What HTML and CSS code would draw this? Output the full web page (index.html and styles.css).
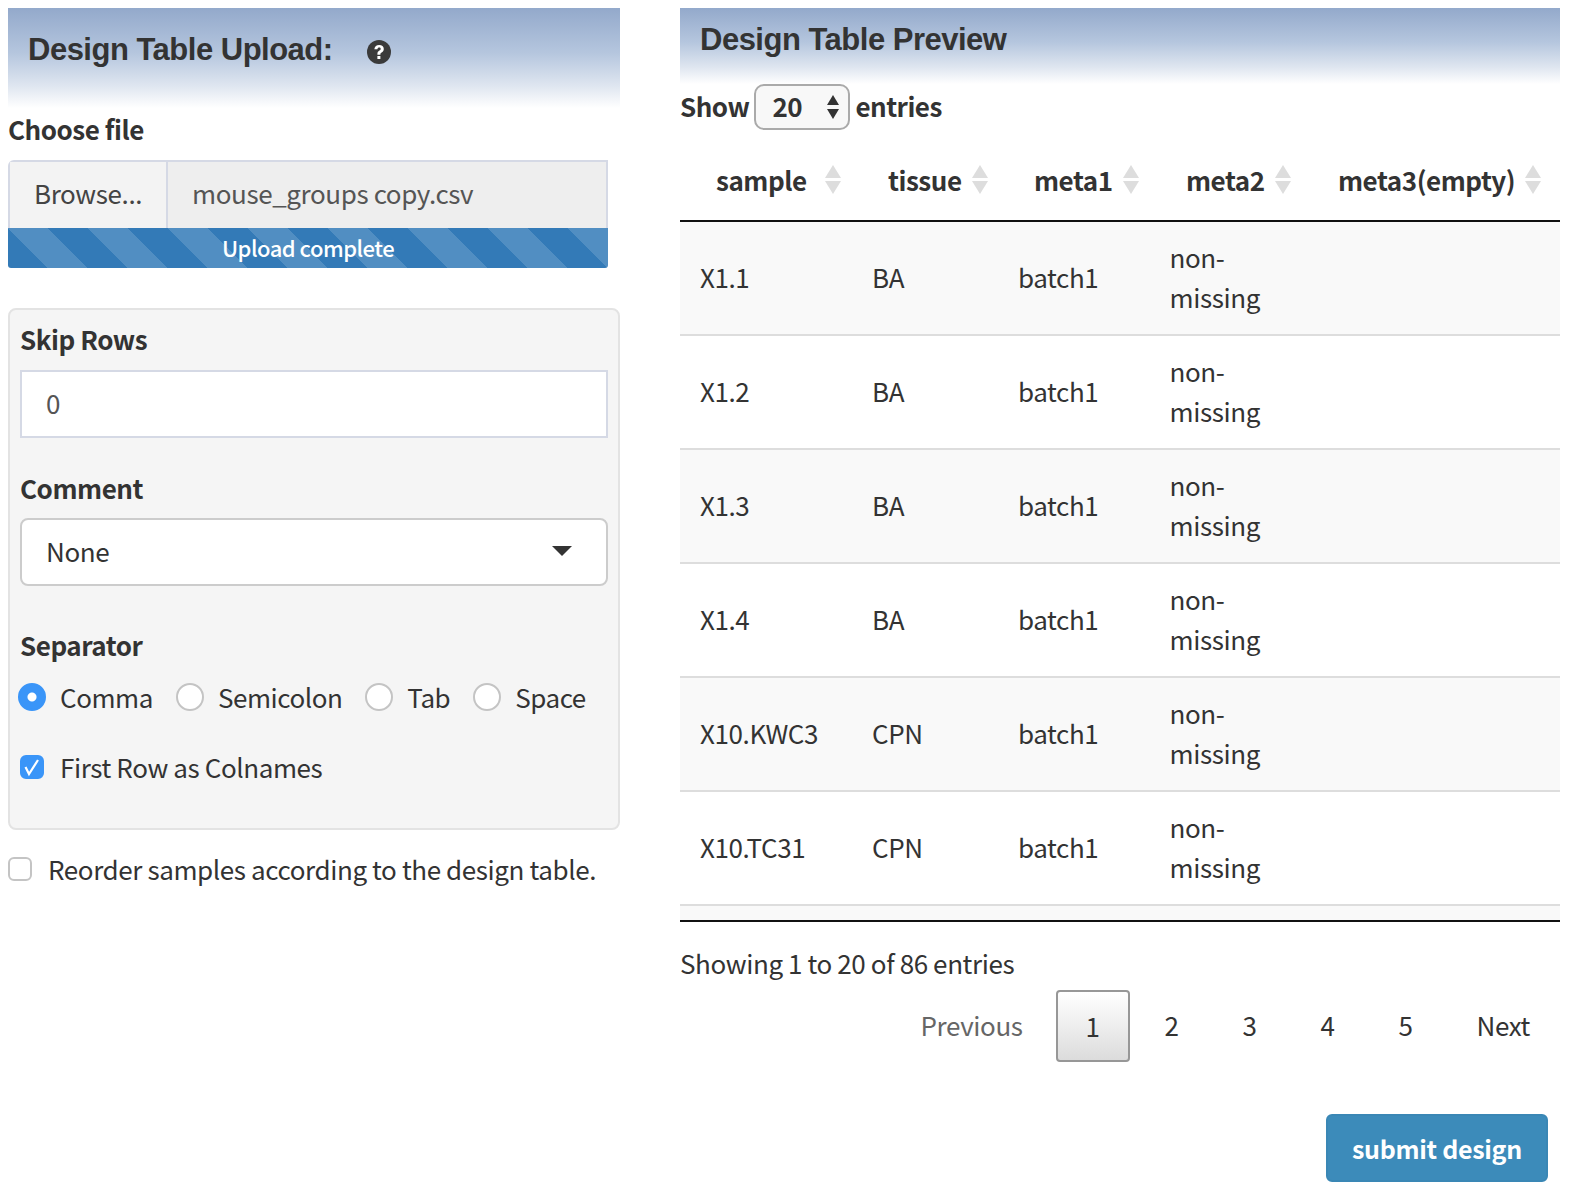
FILE: index.html
```html
<!DOCTYPE html>
<html>
<head>
<meta charset="utf-8">
<title>Design Table</title>
<link rel="stylesheet" href="styles.css">
</head>
<body>
<div class="page">
  <section class="left">
    <h2 class="head head-left">Design Table Upload:
      <svg class="help" viewBox="0 0 24 24"><circle cx="12" cy="12" r="12" fill="#3a3a3a"/><path d="M7.300 9.200c.3-2.700 2.300-4.200 4.900-4.200 2.700 0 4.600 1.600 4.600 3.900 0 1.900-1.100 2.800-2.200 3.500-.9.600-1.200 1-1.200 1.800v.6h-3v-.9c0-1.700.8-2.600 2-3.400.9-.6 1.300-1 1.300-1.600 0-.8-.6-1.300-1.500-1.300-1 0-1.600.6-1.800 1.700z" fill="#fff"/><rect x="10.400" y="16" width="3" height="3" fill="#fff"/></svg>
    </h2>
    <div class="label label-file">Choose file</div>
    <div class="file">
      <span class="browse">Browse...</span>
      <span class="filename">mouse_groups copy.csv</span>
    </div>
    <div class="progress">Upload complete</div>
    <div class="well">
      <div class="label label-first">Skip Rows</div>
      <div class="input">0</div>
      <div class="label label-gap">Comment</div>
      <div class="select">None<span class="caret"></span></div>
      <div class="label label-sep">Separator</div>
      <div class="radios">
        <span class="radio-item"><span class="radio on"></span>Comma</span>
        <span class="radio-item"><span class="radio"></span>Semicolon</span>
        <span class="radio-item"><span class="radio"></span>Tab</span>
        <span class="radio-item"><span class="radio"></span>Space</span>
      </div>
      <div class="check-row">
        <span class="check on"><svg viewBox="0 0 20 20"><path d="M3.500 10l3.500 7 9-14" fill="none" stroke="#fff" stroke-width="2.200"/></svg></span>First Row as Colnames
      </div>
    </div>
    <div class="check-row reorder"><span class="check"></span>Reorder samples according to the design table.</div>
  </section>
  <section class="right">
    <h2 class="head head-right">Design Table Preview</h2>
    <div class="length">Show
      <span class="length-select">20<span class="updown"><i class="up"></i><i class="down"></i></span></span>
      entries
    </div>
    <table class="thead">
      <colgroup><col class="c1"><col class="c2"><col class="c3"><col class="c4"><col class="c5"></colgroup>
      <tr>
        <th>sample<span class="sort sort-wide"><i class="up"></i><i class="down"></i></span></th>
        <th>tissue<span class="sort"><i class="up"></i><i class="down"></i></span></th>
        <th>meta1<span class="sort"><i class="up"></i><i class="down"></i></span></th>
        <th>meta2<span class="sort"><i class="up"></i><i class="down"></i></span></th>
        <th>meta3(empty)<span class="sort"><i class="up"></i><i class="down"></i></span></th>
      </tr>
    </table>
    <div class="scroll">
      <table class="tbody">
        <colgroup><col class="c1"><col class="c2"><col class="c3"><col class="c4"><col class="c5"></colgroup>
        <tr><td>X1.1</td><td>BA</td><td>batch1</td><td>non-<br>missing</td><td></td></tr>
        <tr><td>X1.2</td><td>BA</td><td>batch1</td><td>non-<br>missing</td><td></td></tr>
        <tr><td>X1.3</td><td>BA</td><td>batch1</td><td>non-<br>missing</td><td></td></tr>
        <tr><td>X1.4</td><td>BA</td><td>batch1</td><td>non-<br>missing</td><td></td></tr>
        <tr><td>X10.KWC3</td><td>CPN</td><td>batch1</td><td>non-<br>missing</td><td></td></tr>
        <tr><td>X10.TC31</td><td>CPN</td><td>batch1</td><td>non-<br>missing</td><td></td></tr>
      </table>
    </div>
    <div class="info">Showing 1 to 20 of 86 entries</div>
    <div class="pager">
      <span class="pg prev">Previous</span>
      <span class="pg current">1</span>
      <span class="pg num">2</span>
      <span class="pg num">3</span>
      <span class="pg num">4</span>
      <span class="pg num">5</span>
      <span class="pg next">Next</span>
    </div>
    <div class="actions"><button class="submit">submit design</button></div>
  </section>
</div>
</body>
</html>
```
FILE: styles.css
```css
* { box-sizing: border-box; }
html, body { height: 100%; }
body {
  margin: 8px;
  font-family: "Noto Sans CJK JP", "Noto Sans", sans-serif;
  font-size: 26px;
  letter-spacing: -0.4px;
  line-height: 40px;
  color: #333;
  background: #fff;
  overflow: hidden;
}
.page { display: flex; gap: 60px; align-items: flex-start; }
.left { width: 612px; flex: none; }
.right { width: 880px; flex: none; }

.head {
  margin: 0;
  font-family: "Liberation Sans", Arial, sans-serif;
  font-weight: 700;
  font-size: 31px;
  letter-spacing: -0.5px;
  color: #333;
  background: linear-gradient(to bottom, #93a9cb 0%, #b5c6de 45%, #dfe6f0 78%, #fff 100%);
  padding-left: 20px;
}
.head-left { height: 100px; line-height: 84px; display: flex; align-items: flex-start; }
.head-right { height: 76px; line-height: 64px; }
.help { width: 24px; height: 24px; margin: 32px 0 0 34px; flex: none; }

.label { font-weight: 700; letter-spacing: -0.45px; line-height: 40px; }
.label-file { margin-top: 1px; }
.label-first { margin-top: -1px; }

.file { display: flex; height: 68px; margin-top: 11px; width: 600px; border: 2px solid #d5d9e5; border-bottom: 0; border-radius: 6px 0 0 0; color: #555; }
.browse { width: 158px; padding-left: 24px; line-height: 62px; background: #f3f3f3; border-right: 2px solid #d5d9e5; color: #444; }
.filename { flex: 1; padding-left: 24px; line-height: 62px; background: #eee; }

.progress {
  width: 600px; height: 40px; line-height: 38px;
  font-size: 22px; letter-spacing: -0.5px; font-weight: 500; color: #fff; text-align: center;
  background-color: #337ab7;
  background-image: linear-gradient(45deg, rgba(255,255,255,.15) 25%, transparent 25%, transparent 50%, rgba(255,255,255,.15) 50%, rgba(255,255,255,.15) 75%, transparent 75%, transparent);
  background-size: 80px 80px;
  border-radius: 0 0 3px 3px;
}

.well {
  margin-top: 40px; height: 522px;
  background: #f5f5f5; border: 2px solid #e3e3e3; border-radius: 8px;
  padding: 10px 10px 0;
}
.input {
  height: 68px; margin-top: 11px; padding-left: 24px; line-height: 62px;
  background: #fff; border: 2px solid #d5d9e5; color: #555;
}
.label-gap { margin-top: 30px; }
.label-sep { margin-top: 39px; }
.select {
  position: relative; height: 68px; margin-top: 10px; padding-left: 24px; line-height: 62px;
  background: #fff; border: 2px solid #ccc; border-radius: 8px;
}
.caret {
  position: absolute; right: 34px; top: 26px; width: 0; height: 0;
  border-left: 10px solid transparent; border-right: 10px solid transparent; border-top: 10px solid #333;
}
.radios { display: flex; margin: 12px 0 0 -2px; height: 40px; align-items: center; }
.radio-item { display: flex; align-items: center; margin-right: 23px; letter-spacing: -0.45px; }
.radio { width: 28px; height: 28px; border-radius: 50%; border: 2px solid #c4c4c4; background: #fff; margin-right: 14px; flex: none; }
.radio.on { background: radial-gradient(circle, #fff 0, #fff 4px, #3a95f8 5px); border-color: #3a95f8; }

.check-row { display: flex; align-items: center; height: 40px; }
.well .check-row { margin-top: 30px; }
.check { width: 24px; height: 24px; margin-right: 16px; border: 2px solid #c4c4c4; border-radius: 6px; background: #fff; flex: none; }
.check.on { background: #3a95f8; border-color: #3a95f8; }
.check svg { display: block; width: 20px; height: 20px; }
.reorder { margin-top: 19px; white-space: nowrap; }

.length { display: flex; align-items: flex-start; gap: 5px; height: 46px; line-height: 44px; letter-spacing: -0.5px; font-weight: 700; }
.length-select {
  position: relative; width: 96px; height: 46px; line-height: 40px; padding-left: 16px;
  border: 2px solid #aaa; border-radius: 10px; background: #f8f8f8;
}
.updown { position: absolute; right: 9px; top: 9px; }
.updown i, .sort i { display: block; width: 0; height: 0; border-left: 6px solid transparent; border-right: 6px solid transparent; }
.updown .up { border-bottom: 10px solid #333; margin-bottom: 4px; }
.updown .down { border-top: 10px solid #333; }

table { border-collapse: separate; border-spacing: 0; table-layout: fixed; width: 880px; }
.c1 { width: 172px; } .c2 { width: 146px; } .c3 { width: 152px; } .c4 { width: 152px; } .c5 { width: 258px; }
.thead { margin-top: 10px; }
th {
  height: 82px; padding: 0 0 0 36px; text-align: left; font-weight: 700; letter-spacing: -0.45px; white-space: nowrap;
  border-bottom: 2px solid #111; line-height: 40px;
}
th .sort { display: inline-block; margin-left: 10px; vertical-align: -3px; }
th .sort-wide { margin-left: 18px; }
.sort i { border-left-width: 8px; border-right-width: 8px; }
.sort .up { border-bottom: 13px solid #ddd; margin-bottom: 3px; }
.sort .down { border-top: 13px solid #ddd; }
.scroll { height: 700px; overflow: hidden; border-bottom: 2px solid #111; }
.scroll::after { content: ""; display: block; height: 20px; background: #f9f9f9; }
td { height: 114px; padding: 15px 0 17px 20px; border-bottom: 2px solid #ddd; vertical-align: middle; line-height: 40px; }
td:nth-child(4) { padding-left: 19.5px; }
tr:nth-child(odd) td { background: #f9f9f9; }

.info { margin-top: 21px; height: 40px; }
.pager { display: flex; align-items: center; justify-content: flex-end; height: 72px; margin-top: 7px; padding-right: 30px; }
.pg { text-align: center; line-height: 70px; height: 72px; }
.prev { color: #666; margin-right: 33px; }
.current { width: 74px; line-height: 68px; margin-right: 3px; border: 2px solid #979797; border-radius: 4px; background: linear-gradient(to bottom, #fff, #dcdcdc); }
.num { width: 78px; }
.next { margin-left: 32px; }
.actions { display: flex; justify-content: flex-end; margin-top: 52px; padding-right: 12px; }
.submit {
  width: 222px; height: 68px; border: 2px solid #3a87b5; border-radius: 6px; background: #3c8bba; color: #fff;
  font-family: inherit; font-size: 25px; letter-spacing: -0.3px; font-weight: 700;
}
```
